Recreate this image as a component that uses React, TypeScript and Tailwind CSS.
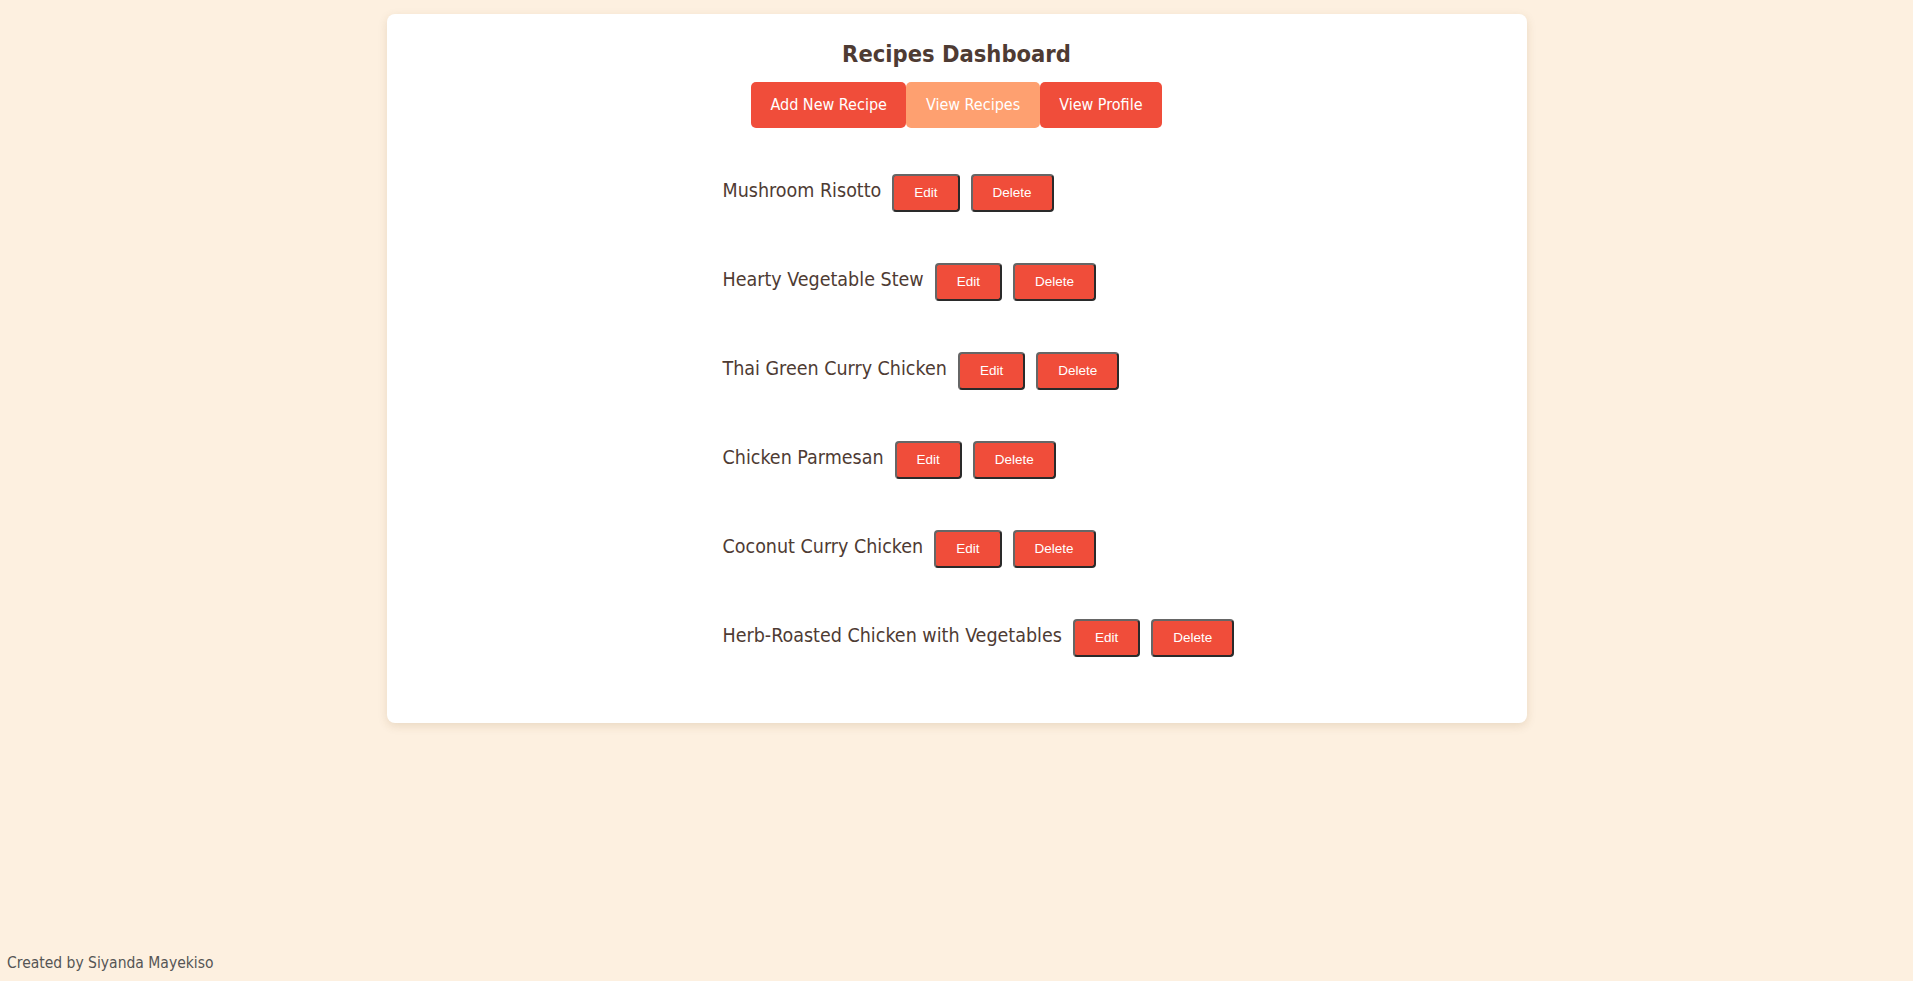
import React from 'react';

const recipes = [
    'Mushroom Risotto',
    'Hearty Vegetable Stew',
    'Thai Green Curry Chicken',
    'Chicken Parmesan',
    'Coconut Curry Chicken',
    'Herb-Roasted Chicken with Vegetables',
];

const font = "font-['DejaVu_Sans_Condensed','Liberation_Sans',sans-serif]";

export default function App() {
    return (
        <div className={`min-h-screen flex flex-col bg-[#fdf0e0] text-[#4e3b33] ${font}`}>
            <div className="mt-[14px] mx-auto w-[1140px] bg-white rounded-[8px] shadow-[0_3px_10px_rgba(120,80,30,0.15)] pt-[26px] pb-[66px]">
                <h1 className="text-center text-[23.5px] leading-[29px] font-bold">Recipes Dashboard</h1>
                <nav className="flex justify-center mt-[13px]">
                    <button className="h-[46px] px-[19.5px] rounded-[5px] bg-[#f04d3a] text-white text-[16px]">Add New Recipe</button>
                    <button className="h-[46px] px-[19.5px] rounded-[5px] bg-[#fea070] text-white text-[16px]">View Recipes</button>
                    <button className="h-[46px] px-[19.5px] rounded-[5px] bg-[#f04d3a] text-white text-[16px]">View Profile</button>
                </nav>

                <ul className="w-[468px] mx-auto mt-[46px] flex flex-col gap-[51px]">
                    {recipes.map((name, index) => (
                        <li key={index} className="flex items-baseline gap-[11px] whitespace-nowrap">
                            <span className="text-[19.5px]">{name}</span>
                            {/* default-looking buttons */}
                            <button className="h-[38px] px-[20px] border-2 border-t-[#666] border-l-[#666] border-b-[#2a2a2a] border-r-[#2a2a2a] rounded-[4px] bg-[#f04d3a] text-white text-[13.5px] font-['Liberation_Sans',sans-serif]">
                                Edit
                            </button>
                            <button className="h-[38px] px-[20px] border-2 border-t-[#666] border-l-[#666] border-b-[#2a2a2a] border-r-[#2a2a2a] rounded-[4px] bg-[#f04d3a] text-white text-[13.5px] font-['Liberation_Sans',sans-serif]">
                                Delete
                            </button>
                        </li>
                    ))}
                </ul>
            </div>

            <footer className="mt-auto px-[7px] pb-[6px] text-[15.5px] text-[#555]">Created by Siyanda Mayekiso</footer>
        </div>
    );
}
